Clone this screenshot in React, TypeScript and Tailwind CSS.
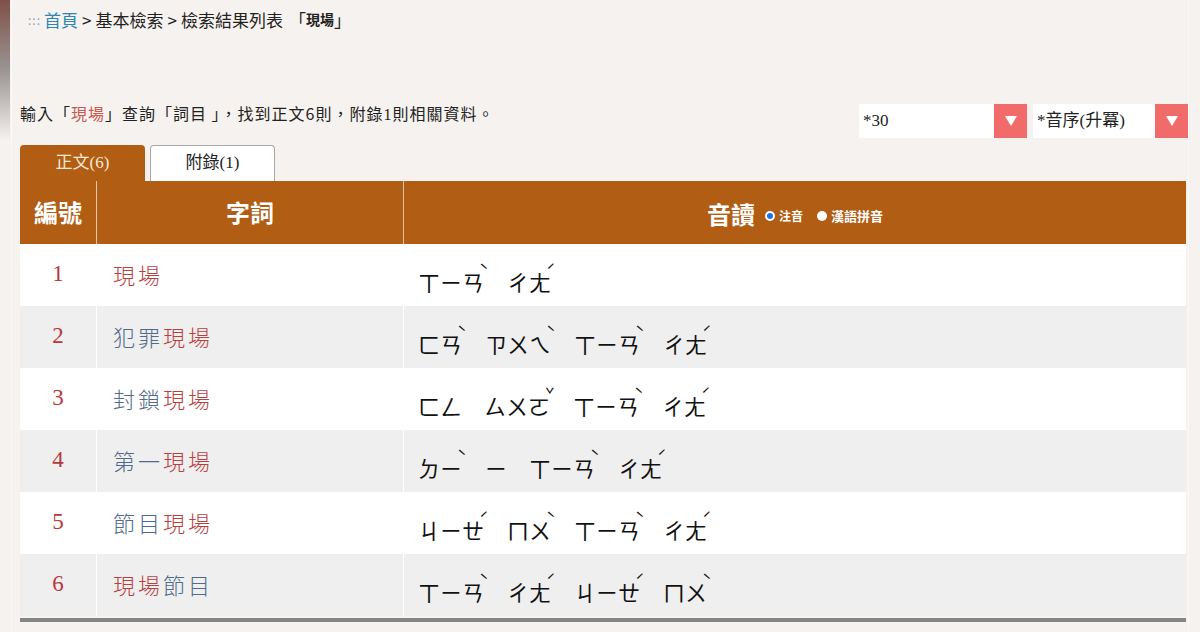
import React from 'react';

type Syl = { b: string; t?: string };
type Row = { n: number; parts: { s: string; hit: boolean }[]; sy: Syl[] };

const XIAN: Syl = { b: 'ㄒㄧㄢ', t: 'ˋ' };
const CHANG: Syl = { b: 'ㄔㄤ', t: 'ˊ' };

const rows: Row[] = [
  { n: 1, parts: [{ s: '現場', hit: true }], sy: [XIAN, CHANG] },
  {
    n: 2,
    parts: [
      { s: '犯罪', hit: false },
      { s: '現場', hit: true },
    ],
    sy: [{ b: 'ㄈㄢ', t: 'ˋ' }, { b: 'ㄗㄨㄟ', t: 'ˋ' }, XIAN, CHANG],
  },
  {
    n: 3,
    parts: [
      { s: '封鎖', hit: false },
      { s: '現場', hit: true },
    ],
    sy: [{ b: 'ㄈㄥ' }, { b: 'ㄙㄨㄛ', t: 'ˇ' }, XIAN, CHANG],
  },
  {
    n: 4,
    parts: [
      { s: '第一', hit: false },
      { s: '現場', hit: true },
    ],
    sy: [{ b: 'ㄉㄧ', t: 'ˋ' }, { b: 'ㄧ' }, XIAN, CHANG],
  },
  {
    n: 5,
    parts: [
      { s: '節目', hit: false },
      { s: '現場', hit: true },
    ],
    sy: [{ b: 'ㄐㄧㄝ', t: 'ˊ' }, { b: 'ㄇㄨ', t: 'ˋ' }, XIAN, CHANG],
  },
  {
    n: 6,
    parts: [
      { s: '現場', hit: true },
      { s: '節目', hit: false },
    ],
    sy: [XIAN, CHANG, { b: 'ㄐㄧㄝ', t: 'ˊ' }, { b: 'ㄇㄨ', t: 'ˋ' }],
  },
];

const cjk = "font-['Noto_Sans_CJK_TC','Noto_Sans',sans-serif]";

function Caret() {
  return (
    <svg width="14" height="12" viewBox="0 0 14 12">
      <path d="M1 1 L13 1 L7 11 Z" fill="#ffffff" />
    </svg>
  );
}

function SelectBox({ label, width }: { label: string; width: string }) {
  return (
    <div className={`flex h-[34px] ${width} bg-white`}>
      <div className="flex flex-1 items-center pl-[4px] text-[17px] text-[#222] font-['Liberation_Serif','Noto_Sans_CJK_TC',serif]">
        {label}
      </div>
      <div className="flex w-[33px] items-center justify-center bg-[#f26b6b]">
        <Caret />
      </div>
    </div>
  );
}

function Syllable({ s }: { s: Syl }) {
  return (
    <span className="inline-flex items-start leading-none">
      <span>{s.b}</span>
      {s.t ? (
        <span className="relative -top-[8px] -ml-[5px] w-[10px] text-[16px] leading-none">{s.t}</span>
      ) : (
        <span className="w-[4px]" />
      )}
    </span>
  );
}

export default function App() {
  return (
    <div className={`flex h-[632px] w-[1200px] overflow-hidden bg-[#f6f2ef] ${cjk}`}>
      <div className="flex w-[12px] shrink-0 flex-col border-r border-[#fbfaf9]">
        <div className="h-[140px] w-[10px] bg-gradient-to-b from-[#7d5148] via-[#9a9494] to-[#f6f2ef]" />
      </div>
      <div className="flex w-[1176px] shrink-0 flex-col pl-[8px]">
        <div className="flex items-center pl-[8px] pt-[7px] text-[17px] text-[#222]">
          <span className="mr-[3px] text-[12px] tracking-[1px] text-[#8aa5b8]">:::</span>
          <span className="text-[#2f86b5]">首頁</span>
          <span className="mx-[4px]">&gt;</span>
          <span>基本檢索</span>
          <span className="mx-[4px]">&gt;</span>
          <span>檢索結果列表</span>
          <span className="ml-[6px]">「</span>
          <span className="text-[14px] font-bold">現場</span>
          <span>」</span>
        </div>

        <div className="mt-[71px] flex items-center justify-between">
          <div className="-mt-[14px] text-[16px] tracking-[1px] text-[#222]">
            輸入「<span className="text-[#c65a52]">現場</span>」查詢「詞目 」，找到正文6則，附錄
            <span className="font-['Liberation_Serif',serif]">1</span>則相關資料。
          </div>
          <div className="flex gap-[6px]">
            <SelectBox label="*30" width="w-[168px]" />
            <SelectBox label="*音序(升冪)" width="w-[155px]" />
          </div>
        </div>

        <div className="mt-[7px] flex h-[36px] items-end gap-[5px]">
          <div className="flex h-[36px] w-[125px] items-center justify-center rounded-t-[4px] bg-[#b15d13] text-[17px] text-[#f7e9d6] font-['Liberation_Serif','Noto_Sans_CJK_TC',serif]">
            正文(6)
          </div>
          <div className="flex h-[36px] w-[125px] items-center justify-center rounded-t-[4px] border border-b-0 border-[#a8a8a8] bg-white text-[17px] text-[#222] font-['Liberation_Serif','Noto_Sans_CJK_TC',serif]">
            附錄(1)
          </div>
        </div>

        <div className="flex w-[1166px] flex-col">
          <div className="flex h-[63px] bg-[#b15d13] text-white">
            <div className="flex w-[77px] items-center justify-center border-r border-[#e3c6a4] text-[24px] font-bold">
              編號
            </div>
            <div className="flex w-[307px] items-center justify-center border-r border-[#e3c6a4] text-[24px] font-bold">
              字詞
            </div>
            <div className="flex flex-1 items-center justify-center pt-[4px]">
              <span className="text-[24px] font-bold">音讀</span>
              <span className="ml-[10px] mt-[4px] inline-block h-[10px] w-[10px] rounded-full border-[2px] border-white bg-[#1a73e8]" />
              <span className="ml-[4px] mt-[4px] text-[12px] font-bold">注音</span>
              <span className="ml-[14px] mt-[4px] inline-block h-[10px] w-[10px] rounded-full bg-white" />
              <span className="ml-[4px] mt-[4px] text-[13px] font-bold">漢語拼音</span>
            </div>
          </div>

          {rows.map((r, i) => (
            <div
              key={r.n}
              className={`flex h-[62px] ${i % 2 === 0 ? 'bg-white' : 'bg-[#efefef]'}`}
            >
              <div className="flex w-[77px] items-center justify-center border-r border-white text-[23px] text-[#b8383a] font-['Liberation_Serif',serif]">
                {r.n}
              </div>
              <div className="flex w-[307px] items-center border-r border-white pl-[16px] text-[22px] font-light tracking-[3px]">
                {r.parts.map((p, k) => (
                  <span key={k} className={p.hit ? 'text-[#b8413f]' : 'text-[#4f6a8a]'}>
                    {p.s}
                  </span>
                ))}
              </div>
              <div className="flex flex-1 items-center gap-[18px] pl-[14px] pt-[12px] text-[22px] text-[#111]">
                {r.sy.map((s, k) => (
                  <Syllable key={k} s={s} />
                ))}
              </div>
            </div>
          ))}
          <div className="mt-[2px] h-[4px] bg-[#858585]" />
        </div>
      </div>
      <div className="flex-1 border-l border-[#fbfaf9] bg-[#f6f2ef]" />
    </div>
  );
}
